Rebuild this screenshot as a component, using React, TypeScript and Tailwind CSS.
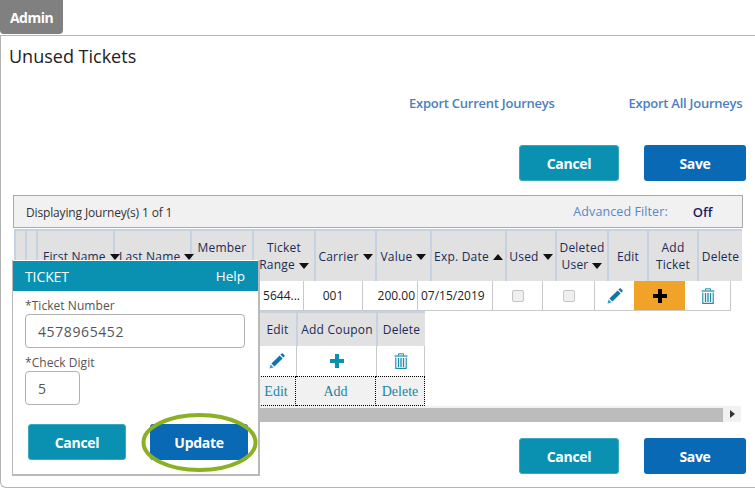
const Caret = ({ up }: { up?: boolean }) => (
  <svg width="10" height="6" viewBox="0 0 10 6" className="inline-block ml-1 align-middle shrink-0">
    <path d={up ? "M0 6 L5 0 L10 6 Z" : "M0 0 L10 0 L5 6 Z"} fill="#111" />
  </svg>
);

const Pencil = () => (
  <svg width="16" height="16" viewBox="0 0 16 16">
    <path d="M0.5 15.5 L1.6 11.4 L4.6 14.4 Z" fill="#3b9cc4" />
    <path d="M2.4 10.6 L10.6 2.4 L13.6 5.4 L5.4 13.6 Z" fill="#0f76ad" />
    <path d="M11.4 1.6 L12.6 0.5 Q13.2 0 13.8 0.5 L15.5 2.2 Q16 2.8 15.5 3.4 L14.4 4.6 Z" fill="#0f76ad" />
  </svg>
);

const Plus = ({ color }: { color: string }) => (
  <svg width="14" height="14" viewBox="0 0 14 14">
    <path d="M5 0 H9 V5 H14 V9 H9 V14 H5 V9 H0 V5 H5 Z" fill={color} />
  </svg>
);

const Trash = () => (
  <svg width="14" height="16" viewBox="0 0 14 16" fill="none" stroke="#1a8ba8">
    <path d="M0.5 3 H13.5" strokeWidth="1.2" />
    <path d="M4.5 2.5 V0.8 H9.5 V2.5" strokeWidth="1" />
    <path d="M1.8 4.5 V15.4 H12.2 V4.5" strokeWidth="1.1" />
    <path d="M4.5 5 V14 M7 5 V14 M9.5 5 V14" strokeWidth="1.3" />
  </svg>
);

const Btn = ({ label, kind, w }: { label: string; kind: "cancel" | "save"; w: string }) => (
  <button
    className={`${w} h-[36px] rounded-[3px] text-white text-[14px] font-bold tracking-[-0.3px] ${
      kind === "cancel" ? "bg-[#0a91b1] border border-[#3ea6bf]" : "bg-[#0a69b5]"
    }`}
  >
    {label}
  </button>
);

const Head = ({ w, children, cls = "justify-center" }: { w: string; children?: React.ReactNode; cls?: string }) => (
  <div
    className={`${w} shrink-0 h-full bg-[#e1e1e1] border-l-2 border-t-2 border-[#c5d2e3] flex items-center text-center text-[12px] leading-[17px] text-[#1c2a55] tracking-[0.2px] ${cls}`}
  >
    <div>{children}</div>
  </div>
);

const Cell = ({ w, children, cls = "" }: { w: string; children?: React.ReactNode; cls?: string }) => (
  <div
    className={`${w} shrink-0 h-full border-l border-[#c9c9c9] flex items-center justify-center text-[12px] text-[#222] ${cls}`}
  >
    {children}
  </div>
);

const Box = () => <div className="w-[12px] h-[12px] rounded-[2px] border border-[#c4c4c4] bg-[#efefef]" />;

const Foot = ({ w, children }: { w: string; children: React.ReactNode }) => (
  <div
    className={`${w} h-full bg-[#f1f1f1] border-r border-t border-b border-dotted border-[#000] flex items-center justify-center text-[14px] text-[#1b84a3] [font-family:'Liberation_Serif',serif]`}
  >
    {children}
  </div>
);

export default function App() {
  return (
    <div className="w-[755px] h-[489px] overflow-hidden bg-white flex flex-col [font-family:'Open_Sans',sans-serif]">
      <div className="w-[63px] h-[34px] shrink-0 bg-[#808080] rounded-b-[4px] flex items-center justify-center text-white text-[14px] font-bold tracking-[-0.5px]">
        Admin
      </div>
      <div className="relative mt-[1px] w-[760px] h-[453px] shrink-0 border-t border-l border-b border-[#b4b4b4] rounded-bl-[6px]">
        <h1 className="pl-[8px] pt-[7px] text-[18px] leading-[26px] font-normal text-[#222]">
          Unused Tickets
        </h1>
        <div className="mt-[25px] flex h-[20px] items-center text-[13px] font-semibold text-[#4a7fc1] tracking-[-0.25px]">
          <span className="ml-[408px]">Export Current Journeys</span>
          <span className="ml-[74px]">Export All Journeys</span>
        </div>
        <div className="mt-[31px] flex pl-[518px] gap-[25px]">
          <Btn label="Cancel" kind="cancel" w="w-[100px]" />
          <Btn label="Save" kind="save" w="w-[102px]" />
        </div>

        <div className="mt-[14px] ml-[12px] w-[730px] h-[33px] pt-[2px] bg-[#f1f1f1] border border-[#aaaaaa] flex items-center text-[12px] text-[#333] pl-[12px]">
          <span className="tracking-[-0.15px]">Displaying Journey(s) 1 of 1</span>
          <span className="ml-[401px] text-[#5a86c4] text-[12.5px] tracking-[0.1px]">Advanced Filter:</span>
          <span className="ml-[25px] text-[#1c1a66] text-[13px] font-semibold">Off</span>
        </div>

        <div className="ml-[13px] mt-[1px] w-[728px] h-[52px] flex overflow-hidden">
          <Head w="w-[11px]" />
          <Head w="w-[11px]" />
          <Head w="w-[77px]" cls="justify-start pl-[5px] relative z-[2]">
            <span className="whitespace-nowrap">First Name<Caret /></span>
          </Head>
          <Head w="w-[77px]" cls="justify-start pl-[4px] relative z-[1]">
            <span className="whitespace-nowrap">Last Name<Caret /></span>
          </Head>
          <Head w="w-[62px]">Member<br />&nbsp;</Head>
          <Head w="w-[62px]">Ticket<br />Range<Caret /></Head>
          <Head w="w-[61px]">Carrier<Caret /></Head>
          <Head w="w-[55px]">Value<Caret /></Head>
          <Head w="w-[75px]">Exp. Date<Caret up /></Head>
          <Head w="w-[50px]">Used<Caret /></Head>
          <Head w="w-[52px]">Deleted<br />User<Caret /></Head>
          <Head w="w-[40px]">Edit</Head>
          <Head w="w-[50px]">Add<br />Ticket</Head>
          <Head w="w-[45px]">Delete</Head>
        </div>

        <div className="ml-[13px] w-[717px] h-[30px] flex border-b border-[#c9c9c9] border-r">
          <Cell w="w-[238px]" cls="border-l-0" />
          <Cell w="w-[51px]" cls="border-l-0 justify-end pr-[3px]">5644...</Cell>
          <Cell w="w-[59px]">001</Cell>
          <Cell w="w-[55px]" cls="justify-end pr-[2px] text-[12.5px]">200.00</Cell>
          <Cell w="w-[75px]" cls="justify-start pl-[3px] text-[12.5px]">07/15/2019</Cell>
          <Cell w="w-[50px]"><Box /></Cell>
          <Cell w="w-[52px]"><Box /></Cell>
          <Cell w="w-[40px]"><Pencil /></Cell>
          <Cell w="w-[51px]" cls="bg-[#f0a229] border-l-0"><Plus color="#000" /></Cell>
          <Cell w="w-[45px]" cls="border-l-0"><Trash /></Cell>
        </div>

        <div className="ml-[256px] w-[168px]">
          <div className="flex h-[35px]">
            <Head w="w-[39px]">Edit</Head>
            <Head w="w-[80px]"><span className="whitespace-nowrap text-[12px]">Add Coupon</span></Head>
            <Head w="w-[49px]">Delete</Head>
          </div>
          <div className="flex h-[30px]">
            <Cell w="w-[39px]" cls="border-l-0"><Pencil /></Cell>
            <Cell w="w-[80px]"><Plus color="#0a91b1" /></Cell>
            <Cell w="w-[49px]" cls="border-r"><Trash /></Cell>
          </div>
          <div className="flex h-[30px]">
            <Foot w="w-[39px]">Edit</Foot>
            <Foot w="w-[80px]">Add</Foot>
            <Foot w="w-[49px]">Delete</Foot>
          </div>
        </div>

        <div className="ml-[259px] w-[481px] h-[16px] bg-[#f1f1f1] flex items-end">
          <div className="w-[463px] h-[14px] bg-[#bcbcbc]" />
          <div className="flex-1 h-full flex items-center justify-center">
            <svg width="5" height="8" viewBox="0 0 5 8"><path d="M0 0 L5 4 L0 8 Z" fill="#333" /></svg>
          </div>
        </div>

        <div className="mt-[16px] flex pl-[518px] gap-[25px]">
          <Btn label="Cancel" kind="cancel" w="w-[100px]" />
          <Btn label="Save" kind="save" w="w-[102px]" />
        </div>

        {/* Ticket popup */}
        <div className="absolute z-20 left-[11px] top-[224px] w-[248px] h-[216px] bg-white border-l border-r-2 border-b-2 border-[#b9b9b9] pt-[1px]">
          <div className="h-[30px] bg-[#0a91b1] flex items-center justify-between pl-[12px] pr-[13px] text-white text-[14px]">
            <span className="tracking-[-0.1px]">TICKET</span>
            <span className="text-[13.5px]">Help</span>
          </div>
          <div className="pl-[12px]">
            <div className="mt-[6px] text-[12px] leading-[18px] tracking-[0.05px] text-[#555]">*Ticket Number</div>
            <div className="mt-[-1px] w-[220px] h-[34px] rounded-[4px] border border-[#b0b0b0] flex items-center pl-[12px] text-[14px] tracking-[0.6px] text-[#555]">
              4578965452
            </div>
            <div className="mt-[6px] text-[12px] leading-[18px] tracking-[0.05px] text-[#555]">*Check Digit</div>
            <div className="mt-[-1px] w-[55px] h-[34px] rounded-[4px] border border-[#b0b0b0] flex items-center pl-[12px] text-[14px] text-[#555]">
              5
            </div>
            <div className="relative mt-[19px] ml-[3px] flex gap-[24px]">
              <Btn label="Cancel" kind="cancel" w="w-[98px]" />
              <Btn label="Update" kind="save" w="w-[98px]" />
              <svg width="117" height="61" viewBox="0 0 117 61" className="absolute left-[113px] top-[-12px] pointer-events-none">
                <ellipse cx="58.5" cy="30.5" rx="56" ry="27.5" fill="none" stroke="#8cb023" strokeWidth="4" />
              </svg>
            </div>
          </div>
        </div>
      </div>
    </div>
  );
}
